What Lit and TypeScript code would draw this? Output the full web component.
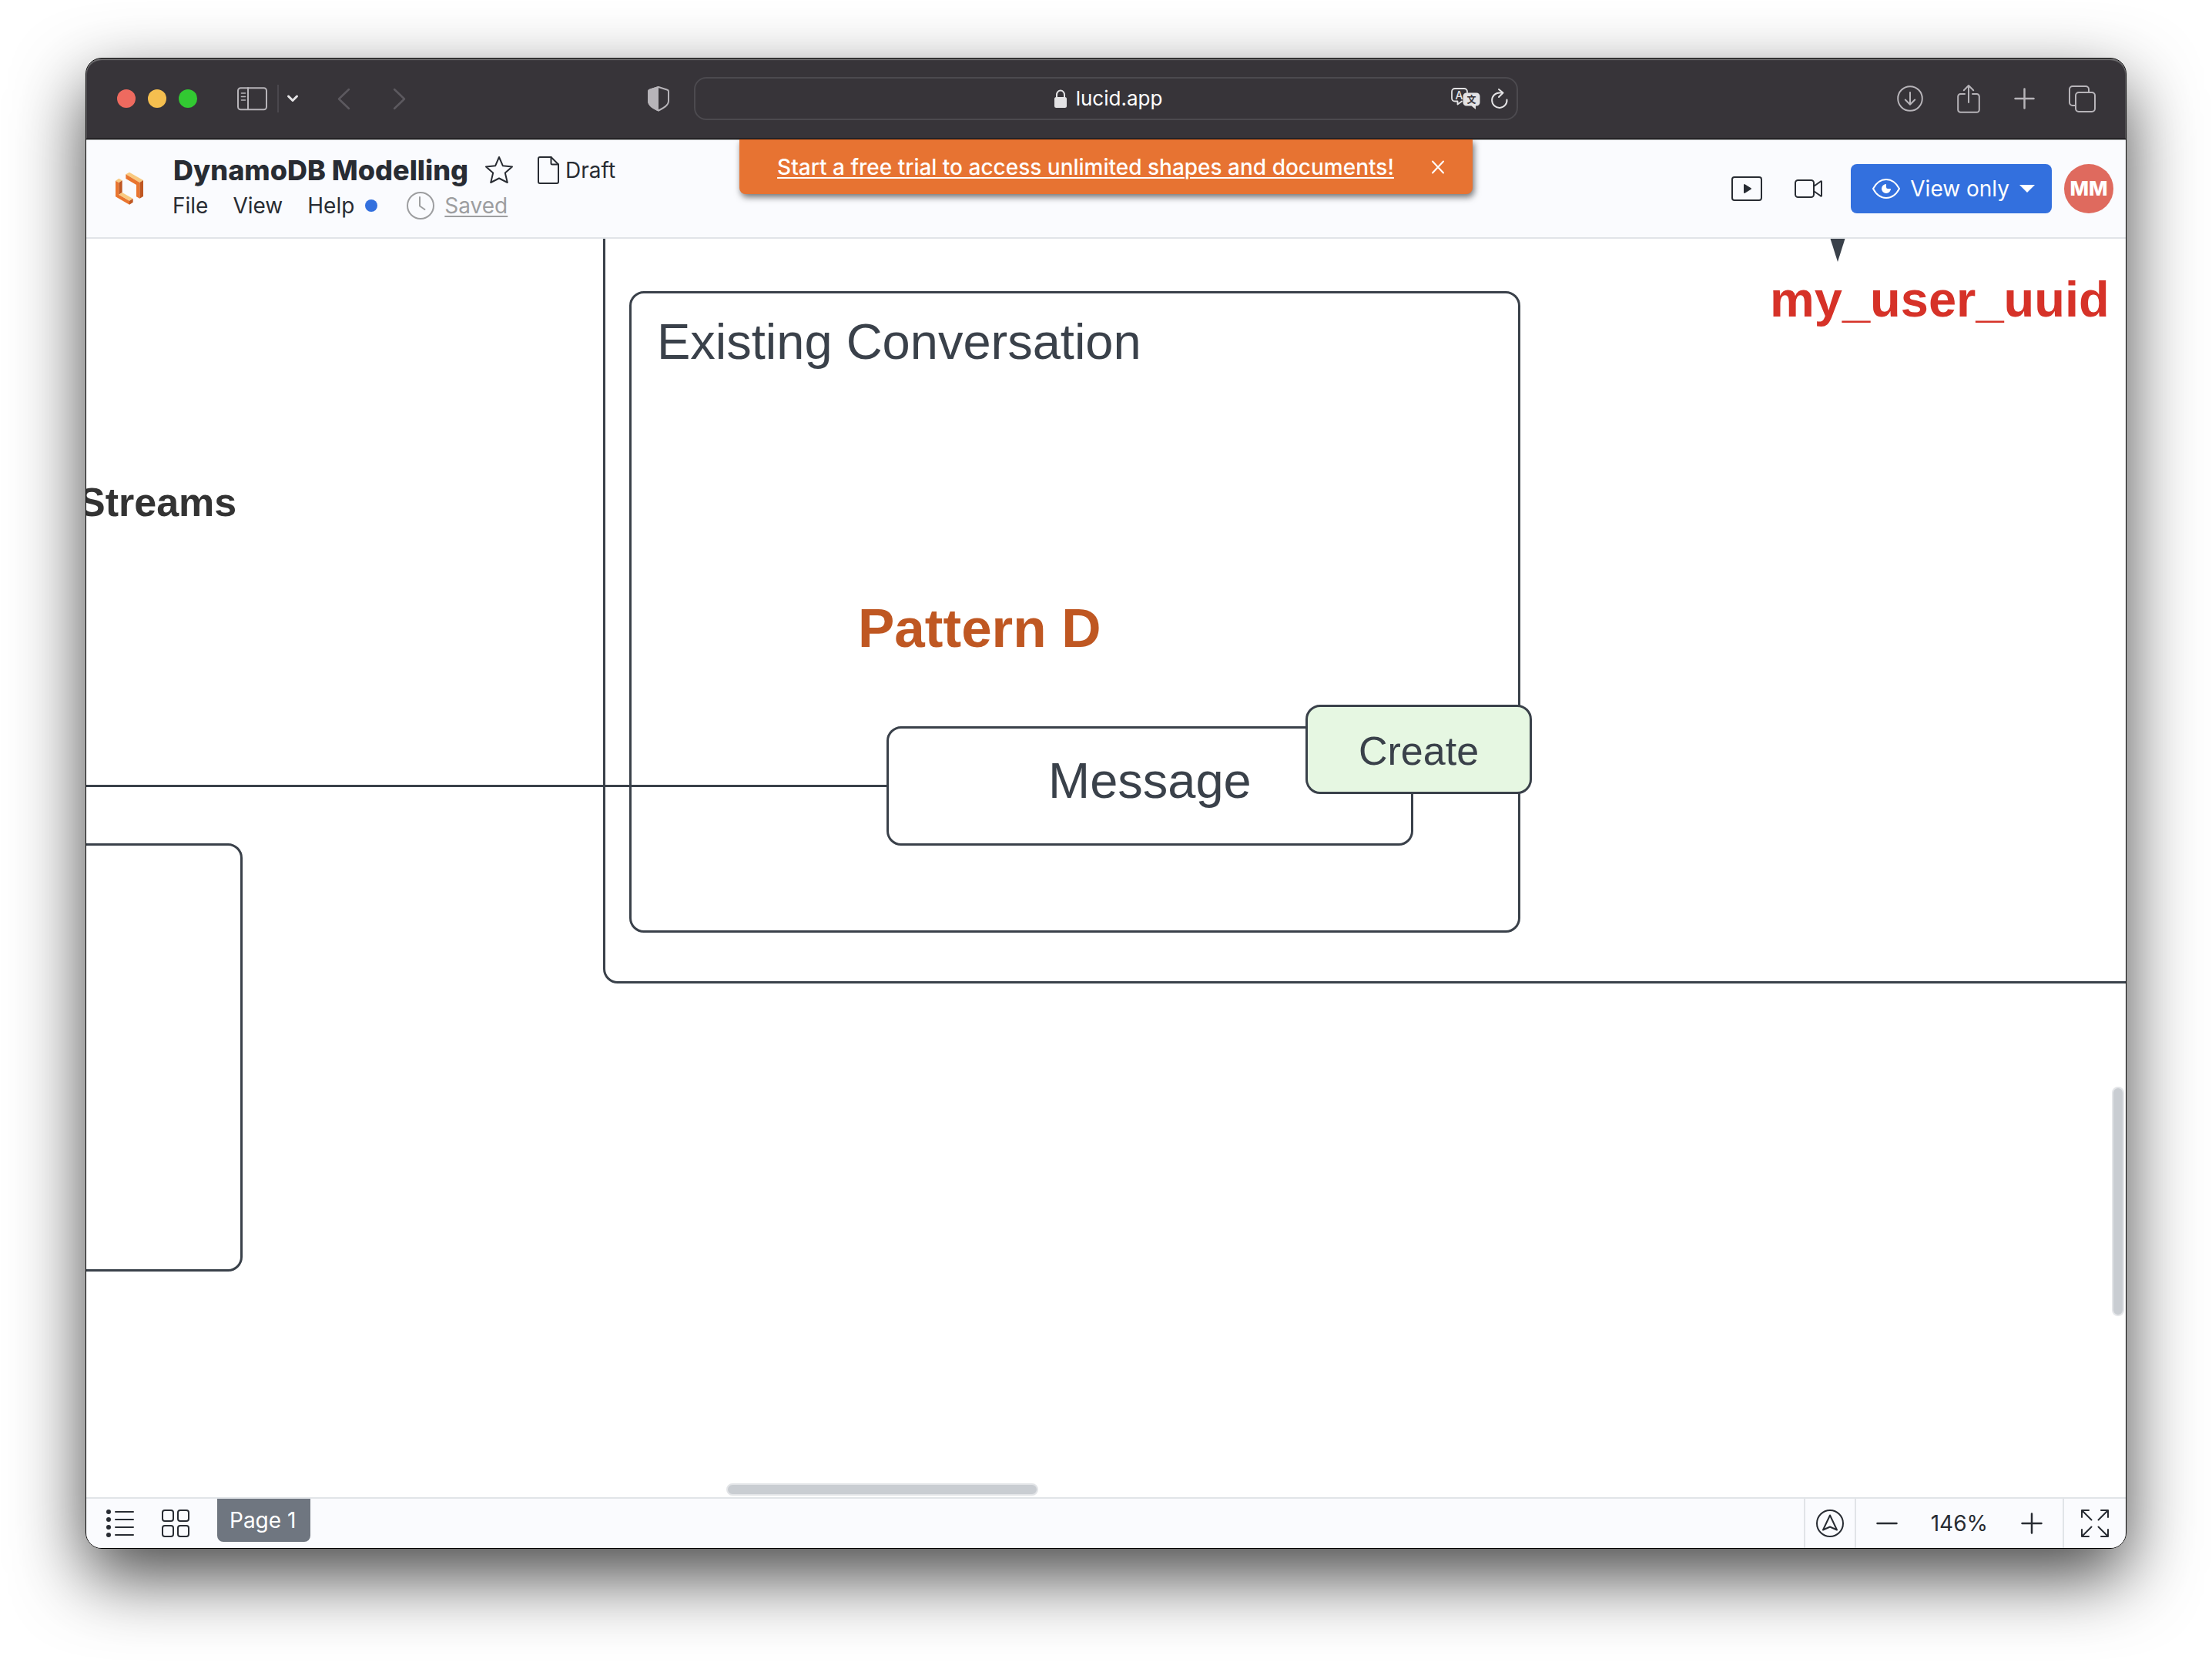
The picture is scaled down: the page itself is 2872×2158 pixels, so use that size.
import { LitElement, html, css, svg, nothing } from "lit";
import { customElement, property } from "lit/decorators.js";
import { styleMap } from "lit/directives/style-map.js";

/* ---------- icons ---------- */

const icons: Record<string, { w: number; h: number; body: unknown }> = {
  logo: {
    w: 36, h: 43,
    body: svg`<g transform="scale(.3333) translate(-180 -490)" stroke="none">
      <path fill="#f9c97f" d="M220 500 234 492 288 523 274 532Z"/>
      <path fill="#e9752f" d="M220 500 274 532V594L261 587V541L220 517Z"/>
      <path fill="#bf5722" d="M274 532 288 523V586L274 594Z"/>
      <path fill="#f9c97f" d="M180 525 193 516 206 524 193 533Z"/>
      <path fill="#e9752f" d="M180 525 193 533V579L234 603V618L180 587Z"/>
      <path fill="#bf5722" d="M193 533 206 524V571L193 579Z"/>
      <path fill="#f9c97f" d="M193 579 206 571 248 595 234 603Z"/>
      <path fill="#bf5722" d="M234 603 248 595V609L234 618Z"/></g>`,
  },
  sidebar: {
    w: 39, h: 31,
    body: svg`<rect x="1" y="1.2" width="37" height="28" rx="3.5"/><path d="M14 1V29"/>
      <path stroke-width="1.6" d="M5.5 8H10.5M5.5 12.500H10.5M5.5 17H10.5"/>`,
  },
  chevronDown: { w: 14, h: 10, body: svg`<path stroke-width="3" d="M1.500 2 7 7.500 12.500 2"/>` },
  back: { w: 17, h: 29, body: svg`<path stroke-width="2.500" d="M15 2 2 14.500 15 27"/>` },
  forward: { w: 17, h: 29, body: svg`<path stroke-width="2.500" d="M2 2 15 14.500 2 27"/>` },
  shield: {
    w: 28, h: 34,
    body: svg`<path d="M14 2 25 5.500Q27 6 27 8V20C27 26 20 29.500 14 32.500 8 29.500 1 26 1 20V8Q1 6 3 5.500Z"/>
      <path fill="currentColor" stroke="none" d="M14 1 3 4.500Q0 5.500 0 8V20C0 27 8 31 14 33.500Z"/>`,
  },
  lock: {
    w: 16, h: 24,
    body: svg`<rect x="0" y="10" width="16" height="14" rx="2.500" fill="currentColor" stroke="none"/><path d="M3 11V7A5 5.500 0 0 1 13 7V11"/>`,
  },
  translate: {
    w: 38, h: 28,
    body: svg`<path stroke-width="1.800" d="M14 17.500 8.500 21.500V17.500H5A4 4 0 0 1 1 13.500V5A4 4 0 0 1 5 1H17A4 4 0 0 1 21 5V6"/>
      <text x="5.500" y="14.500" font-size="14" font-weight="500" fill="currentColor" stroke="none">A</text>
      <path fill="currentColor" stroke="none" d="M20 6.500H33A4.500 4.500 0 0 1 37.500 11V19A4.500 4.500 0 0 1 33 23.500H32V28L26.500 23.500H20A4.500 4.500 0 0 1 15.500 19V11A4.500 4.500 0 0 1 20 6.500Z"/>
      <text x="20.500" y="19.500" font-size="12" font-weight="700" font-family="'Noto Sans CJK SC', sans-serif" fill="#373439" stroke="none">文</text>`,
  },
  reload: {
    w: 22, h: 26,
    body: svg`<path d="M20.500 14.500A9.700 9.700 0 1 1 11 5.500H15"/><path d="M10 1 15.500 5.500 10 11"/>`,
  },
  download: { w: 34, h: 34, body: svg`<circle cx="17" cy="17" r="15.800"/><path d="M17 9V24.500M10.800 18.500 17 24.700 23.200 18.500"/>` },
  share: {
    w: 30, h: 38,
    body: svg`<path d="M10 13H4.500A3.300 3.300 0 0 0 1.200 16.300V33.500A3.300 3.300 0 0 0 4.500 36.800H25.500A3.300 3.300 0 0 0 28.800 33.500V16.300A3.300 3.300 0 0 0 25.500 13H20"/><path d="M15 24V2.500M8.800 8.200 15 2 21.200 8.200"/>`,
  },
  plusBar: { w: 27, h: 28, body: svg`<path stroke-width="2.500" d="M13.500 1.500V26.500M1.500 14H25.500"/>` },
  tabs: {
    w: 35, h: 35,
    body: svg`<rect x="9" y="9" width="25" height="25" rx="4"/><path d="M9 26H5A4 4 0 0 1 1 22V5A4 4 0 0 1 5 1H22A4 4 0 0 1 26 5V9"/>`,
  },
  star: { w: 36, h: 36, body: svg`<path d="M18 1 22.800 12.200 35 13.500 25.800 21.500 28.800 34 18 28.500 7.200 34 10.200 21.500 1 13.500 13.200 12.200Z"/>` },
  doc: {
    w: 28, h: 36,
    body: svg`<path d="M17.500 1H3A2 2 0 0 0 1 3V33A2 2 0 0 0 3 35H25A2 2 0 0 0 27 33V10.500Z"/><path d="M17.500 1V9A1.500 1.500 0 0 0 19 10.500H27"/>`,
  },
  clock: { w: 36, h: 36, body: svg`<circle cx="18" cy="18" r="17"/><path d="M17 7V18.500L23.500 23"/>` },
  close: { w: 16, h: 18, body: svg`<path d="M1 1.500 15 16.500M15 1.500 1 16.500"/>` },
  present: {
    w: 40, h: 32,
    body: svg`<rect x="1" y="1" width="38" height="30" rx="3"/><path fill="currentColor" d="M17 11V21L25 16Z"/>`,
  },
  video: {
    w: 36, h: 24,
    body: svg`<rect x="1" y="1" width="24" height="22" rx="3.500"/><path d="M25.500 8.500 34 2.500Q35 2 35 3V21Q35 22 34 21.500L25.500 15.500"/>`,
  },
  eye: {
    w: 36, h: 26,
    body: svg`<path d="M1 13C5 5.500 11 1 18 1S31 5.500 35 13C31 20.500 25 25 18 25S5 20.500 1 13Z"/>
      <path fill="currentColor" stroke="none" d="M18 7A6 6 0 1 0 24 13H20A2 2 0 0 1 18 11Z"/>`,
  },
  caret: { w: 20, h: 10, body: svg`<path fill="currentColor" stroke="none" d="M0 0H20L10 10Z"/>` },
  list: {
    w: 36, h: 36,
    body: svg`<path d="M12 3H35M12 13H35M12 23H35M12 33H35"/><g fill="currentColor" stroke="none"><circle cx="3" cy="3" r="3"/><circle cx="3" cy="13" r="3"/><circle cx="3" cy="23" r="3"/><circle cx="3" cy="33" r="3"/></g>`,
  },
  grid: {
    w: 36, h: 36,
    body: svg`<rect x="1" y="1" width="14" height="14" rx="3"/><rect x="21" y="1" width="14" height="14" rx="3"/><rect x="1" y="21" width="14" height="14" rx="3"/><rect x="21" y="21" width="14" height="14" rx="3"/>`,
  },
  compass: { w: 36, h: 36, body: svg`<circle cx="18" cy="18" r="17"/><path d="M18 7.500 27 26.500 18 22.500 9 26.500Z"/>` },
  minus: { w: 28, h: 28, body: svg`<path stroke-width="2.500" d="M1.500 14H26.500"/>` },
  plus: { w: 28, h: 28, body: svg`<path stroke-width="2.500" d="M1.500 14H26.500M14 1.500V26.500"/>` },
  expand: {
    w: 36, h: 36,
    body: svg`<path d="M1 10V1H10M1 1 13.500 13.500M26 1H35V10M35 1 22.500 13.500M1 26V35H10M1 35 13.500 22.500M35 26V35H26M35 35 22.500 22.500"/>`,
  },
};

@customElement("ui-icon")
class UiIcon extends LitElement {
  static styles = css`
    :host { display: block; flex: none; }
    .glyph { display: block; font-family: Inter, sans-serif; overflow: visible; }
  `;
  @property() name = "";
  render() {
    const i = icons[this.name];
    return i
      ? html`<svg class="glyph" width=${i.w} height=${i.h} viewBox="0 0 ${i.w} ${i.h}" fill="none"
          stroke="currentColor" stroke-width="2" stroke-linecap="round" stroke-linejoin="round" aria-hidden="true">${i.body}</svg>`
      : nothing;
  }
}

/* ---------- browser toolbar ---------- */

@customElement("browser-bar")
class BrowserBar extends LitElement {
  static styles = css`
    :host { display: block; }
    .bar {
      display: grid; grid-template-columns: 1fr minmax(0, 1070px) 1fr; align-items: center;
      height: 104px; background: #373439; color: #b7b4b9; border-bottom: 1px solid #000;
      border-radius: 20px 20px 0 0; box-shadow: inset 0 2px 1px #706f71, inset 1px 0 0 #5a585c, inset -1px 0 0 #5a585c;
    }
    button { display: block; border: 0; padding: 0; background: none; color: inherit; }
    .side { display: flex; align-items: center; }
    .left { padding: 0 32px 0 40px; }
    .right { justify-content: flex-end; gap: 44px; padding-right: 39px; }
    .lights { display: flex; gap: 16px; margin-right: 52px; }
    .light { width: 24px; height: 24px; border-radius: 50%; }
    .red { background: #ee6a5f; }
    .yellow { background: #f5bf4f; }
    .green { background: #32c932; }
    .split { width: 2px; height: 36px; margin: 0 11px 0 13px; background: #4a474d; }
    .menu { color: #e6e5e7; }
    .history { display: flex; gap: 55px; margin-left: 51px; color: #5c595f; }
    .shield { margin-left: auto; }
    .address {
      display: grid; grid-template-columns: 1fr auto 1fr; align-items: center; box-sizing: border-box;
      height: 56px; padding: 0 11px; border: 2px solid #4c4a4f; border-radius: 16px; color: #e3e2e4;
    }
    .site { grid-column: 2; display: flex; align-items: center; gap: 12px; padding-left: 6px; }
    .url {
      field-sizing: content; border: 0; padding: 0; background: none; color: #fff;
      font: 400 26px/32px Inter, sans-serif; outline: 0;
    }
    .tools { display: flex; align-items: center; justify-content: flex-end; gap: 14px; }
  `;
  render() {
    return html`<div class="bar">
      <div class="side left">
        <div class="lights">
          <button class="light red" aria-label="Close window"></button>
          <button class="light yellow" aria-label="Minimise window"></button>
          <button class="light green" aria-label="Zoom window"></button>
        </div>
        <button aria-label="Sidebar"><ui-icon name="sidebar"></ui-icon></button>
        <span class="split"></span>
        <button class="menu" aria-label="Tab groups"><ui-icon name="chevronDown"></ui-icon></button>
        <div class="history">
          <button aria-label="Back"><ui-icon name="back"></ui-icon></button>
          <button aria-label="Forward"><ui-icon name="forward"></ui-icon></button>
        </div>
        <button class="shield" aria-label="Privacy report"><ui-icon name="shield"></ui-icon></button>
      </div>
      <div class="address">
        <label class="site"><ui-icon name="lock"></ui-icon><input class="url" aria-label="Address" .value=${"lucid.app"} /></label>
        <div class="tools">
          <button aria-label="Translate"><ui-icon name="translate"></ui-icon></button>
          <button aria-label="Reload"><ui-icon name="reload"></ui-icon></button>
        </div>
      </div>
      <div class="side right">
        <button aria-label="Downloads"><ui-icon name="download"></ui-icon></button>
        <button aria-label="Share"><ui-icon name="share"></ui-icon></button>
        <button aria-label="New tab"><ui-icon name="plusBar"></ui-icon></button>
        <button aria-label="Tab overview"><ui-icon name="tabs"></ui-icon></button>
      </div>
    </div>`;
  }
}

/* ---------- document header ---------- */

@customElement("doc-header")
class DocHeader extends LitElement {
  static styles = css`
    :host { display: block; position: relative; z-index: 1; }
    .header {
      display: grid; grid-template-columns: 1fr auto 1fr; box-sizing: border-box; height: 129px;
      background: #fafbfe; border-bottom: 2px solid #e1e4e8; color: #282c33; box-shadow: inset 0 1px 0 #b9babb;
      font: 400 28px/36px Inter, sans-serif;
    }
    button { display: block; border: 0; padding: 0; background: none; color: inherit; font: inherit; }
    a { color: inherit; text-decoration-thickness: 2px; text-underline-offset: 3px; }
    .left { display: flex; align-items: center; gap: 38px; padding-left: 38px; white-space: nowrap; }
    .row { display: flex; align-items: center; height: 44px; }
    .menus { height: 48px; }
    .title { margin: 0 22px 0 1px; font-size: 36px; font-weight: 800; line-height: 44px; }
    .draft { display: flex; align-items: center; gap: 8px; margin-left: 32px; }
    .menu { margin-right: 32px; }
    .help { margin-right: 14px; }
    .dot { width: 16px; height: 16px; margin-right: 38px; border-radius: 50%; background: #3370de; }
    .saved { display: flex; align-items: center; gap: 13px; color: #9d9ea0; }
    .banner {
      align-self: start; display: flex; align-items: center; gap: 49px; height: 71px; padding: 0 37px 0 49px;
      background: #e77332; color: #fff; border-radius: 0 0 8px 8px; box-shadow: 2px 4px 8px rgba(0, 0, 0, .55);
      clip-path: inset(0 -20px -20px -20px); font-weight: 500; white-space: nowrap;
    }
    .right { display: flex; align-items: center; justify-content: flex-end; padding-right: 16px; }
    .present { margin-right: 42px; }
    .video { margin-right: 37px; }
    .mode {
      display: flex; align-items: center; height: 64px; padding: 0 22px 0 28px; border-radius: 8px;
      background: #3370de; color: #fff; white-space: nowrap;
    }
    .mode-name { margin: 0 13px; }
    .avatar {
      width: 64px; height: 64px; margin-left: 16px; border-radius: 50%; background: #df6a5e; color: #fff;
      font-size: 26px; font-weight: 800;
    }
  `;
  render() {
    return html`<header class="header">
      <div class="left">
        <ui-icon name="logo"></ui-icon>
        <div>
          <div class="row">
            <h1 class="title">DynamoDB Modelling</h1>
            <button aria-label="Favourite"><ui-icon name="star"></ui-icon></button>
            <button class="draft"><ui-icon name="doc"></ui-icon>Draft</button>
          </div>
          <div class="row menus">
            <button class="menu">File</button>
            <button class="menu">View</button>
            <button class="help">Help</button>
            <span class="dot"></span>
            <span class="saved"><ui-icon name="clock"></ui-icon><a href="#history">Saved</a></span>
          </div>
        </div>
      </div>
      <div class="banner">
        <a href="#trial">Start a free trial to access unlimited shapes and documents!</a>
        <button aria-label="Dismiss"><ui-icon name="close"></ui-icon></button>
      </div>
      <div class="right">
        <button class="present" aria-label="Present"><ui-icon name="present"></ui-icon></button>
        <button class="video" aria-label="Video call"><ui-icon name="video"></ui-icon></button>
        <button class="mode"><ui-icon name="eye"></ui-icon><span class="mode-name">View only</span><ui-icon name="caret"></ui-icon></button>
        <button class="avatar" aria-label="Account">MM</button>
      </div>
    </header>`;
  }
}

/* ---------- diagram ---------- */

interface Shape { x: number; y: number; w: number; h: number; fill?: string }
interface Label { text: string; x: number; y: number; size: number; color: string; bold?: boolean }

const INK = "#3a414a";

const shapes: Shape[] = [
  { x: 671, y: -200, w: 2100, h: 1167 },
  { x: 705, y: 68, w: 1157, h: 833 },
  { x: 1039, y: 633, w: 684, h: 155 },
  { x: 1583, y: 605, w: 294, h: 116, fill: "#e6f7e2" },
  { x: -200, y: 785, w: 403, h: 556 },
];

const labels: Label[] = [
  { text: "Existing Conversation", x: 741, y: 101, size: 65, color: INK },
  { text: "my_user_uuid", x: 2186, y: 46, size: 65, color: "#d63228", bold: true },
  { text: "Streams", x: -10, y: 316, size: 52, color: "#333333", bold: true },
  { text: "Pattern D", x: 1002, y: 470, size: 71, color: "#bf5722", bold: true },
  { text: "Message", x: 1249, y: 671, size: 65, color: INK },
  { text: "Create", x: 1652, y: 639, size: 52, color: INK },
];

@customElement("diagram-canvas")
class DiagramCanvas extends LitElement {
  static styles = css`
    :host { display: block; position: relative; overflow: hidden; background: #fff; }
    .shape { position: absolute; box-sizing: border-box; border: 3px solid #3a414a; border-radius: 19px; }
    .label { position: absolute; line-height: 1; white-space: nowrap; font-family: "Liberation Sans", sans-serif; font-weight: 400; }
    .bold { font-weight: 700; }
    .connector { position: absolute; left: 0; top: 709px; width: 1040px; height: 3px; background: #3a414a; }
    .arrow { position: absolute; left: 2264px; top: 0; }
    .thumb { position: absolute; box-sizing: border-box; border: 2px solid #e3e5e8; border-radius: 8px; background: #c9cdd2; }
    .vertical { right: 2px; top: 1101px; width: 16px; height: 298px; }
    .horizontal { left: 831px; bottom: 2px; width: 405px; height: 16px; }
  `;
  render() {
    return html`
      ${shapes.map((s) => html`<div class="shape" style=${styleMap({
        left: `${s.x}px`, top: `${s.y}px`, width: `${s.w}px`, height: `${s.h}px`, background: s.fill ?? "transparent",
      })}></div>`)}
      <div class="connector"></div>
      <svg class="arrow" width="20" height="30" viewBox="0 0 20 30" aria-hidden="true"><path fill="#3a414a" d="M.500 0H19.500L10 30Z"/></svg>
      ${labels.map((l) => html`<div class="label ${l.bold ? "bold" : ""}" style=${styleMap({
        left: `${l.x}px`, top: `${l.y}px`, fontSize: `${l.size}px`, color: l.color,
      })}>${l.text}</div>`)}
      <div class="thumb vertical"></div>
      <div class="thumb horizontal"></div>`;
  }
}

/* ---------- page bar ---------- */

@customElement("page-bar")
class PageBar extends LitElement {
  static styles = css`
    :host { display: block; }
    .bar {
      display: flex; align-items: stretch; box-sizing: border-box; height: 66px; padding-left: 26px;
      background: #fafbfe; border-top: 2px solid #e1e4e8; color: #282c33; font: 400 28px/36px Inter, sans-serif;
    }
    button { display: block; border: 0; padding: 0; background: none; color: inherit; font: inherit; }
    .views { display: flex; align-items: center; gap: 36px; margin-right: 36px; }
    .page { height: 56px; padding: 0 19px 0 16px; border-radius: 0 0 8px 8px; background: #6f7680; color: #fff; }
    .cell { display: flex; align-items: center; box-sizing: border-box; border-left: 2px solid #e1e4e8; }
    .compass { margin-left: auto; width: 66px; padding-left: 14px; }
    .zoom { gap: 43px; padding: 0 26px; }
    .full { padding: 0 22px; }
  `;
  render() {
    return html`<footer class="bar">
      <div class="views">
        <button aria-label="Page list"><ui-icon name="list"></ui-icon></button>
        <button aria-label="Page grid"><ui-icon name="grid"></ui-icon></button>
      </div>
      <button class="page">Page 1</button>
      <div class="cell compass"><button aria-label="Navigator"><ui-icon name="compass"></ui-icon></button></div>
      <div class="cell zoom">
        <button aria-label="Zoom out"><ui-icon name="minus"></ui-icon></button>
        <button>146%</button>
        <button aria-label="Zoom in"><ui-icon name="plus"></ui-icon></button>
      </div>
      <div class="cell full"><button aria-label="Full screen"><ui-icon name="expand"></ui-icon></button></div>
    </footer>`;
  }
}

@customElement("app-root")
class AppRoot extends LitElement {
  static styles = css`
    :host {
      display: flex; box-sizing: border-box; min-height: 100vh; padding: 75px 111px 147px; background: #fff; overflow: hidden;
    }
    .window {
      flex: 1; min-width: 0; display: flex; flex-direction: column; border: 1px solid #000; border-radius: 21px;
      box-shadow: 0 36px 92px rgba(0, 0, 0, .72);
    }
    .content { flex: 1; display: flex; flex-direction: column; overflow: hidden; border-radius: 20px; background: #373439; }
    .canvas { flex: 1; }
  `;
  render() {
    return html`<div class="window"><div class="content">
      <browser-bar></browser-bar>
      <doc-header></doc-header>
      <diagram-canvas class="canvas"></diagram-canvas>
      <page-bar></page-bar>
    </div></div>`;
  }
}
